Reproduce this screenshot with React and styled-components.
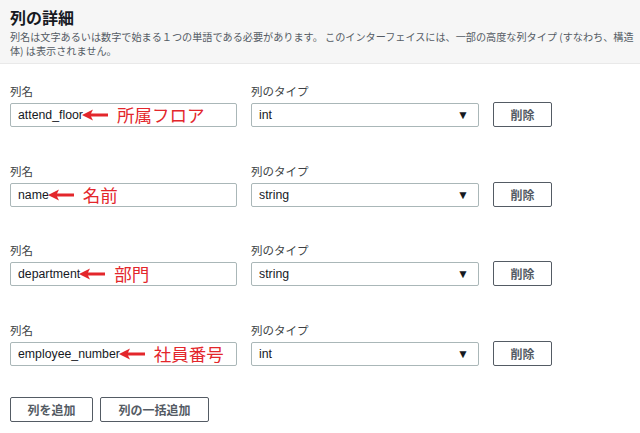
import React from 'react'
import styled, { createGlobalStyle } from 'styled-components'

const columns = [
  { name: 'attend_floor', type: 'int', note: '所属フロア' },
  { name: 'name', type: 'string', note: '名前' },
  { name: 'department', type: 'string', note: '部門' },
  { name: 'employee_number', type: 'int', note: '社員番号' },
]

const App = () => {
  return (
    <>
      <GlobalStyle />
      <Page>
        <Header>
          <Title>列の詳細</Title>
          <Description>
            <Line>列名は文字あるいは数字で始まる１つの単語である必要があります。 このインターフェイスには、一部の高度な列タイプ (すなわち、構造</Line>
            <Line>体) は表示されません。</Line>
          </Description>
        </Header>

        <Body>
          {columns.map((col) => (
            <Row key={col.name}>
              <Field>
                <Label>列名</Label>
                <InputBox>
                  <Value>{col.name}</Value>
                  <Arrow />
                  <Note>{col.note}</Note>
                </InputBox>
              </Field>
              <Field>
                <Label>列のタイプ</Label>
                <SelectBox>
                  <Value>{col.type}</Value>
                  <Caret>▼</Caret>
                </SelectBox>
              </Field>
              <DeleteButton>削除</DeleteButton>
            </Row>
          ))}

          <Actions>
            <Button>列を追加</Button>
            <Button>列の一括追加</Button>
          </Actions>
        </Body>
      </Page>
    </>
  )
}

const Arrow = () => (
  <ArrowSvg width="27" height="12" viewBox="0 0 27 12">
    <path d="M0 6 L11 0.5 L9 4.6 L26 4.6 L26 7.4 L9 7.4 L11 11.5 Z" fill="#e3262b" />
  </ArrowSvg>
)

export default App

const GlobalStyle = createGlobalStyle`
  body {
    margin: 0;
    background: #ffffff;
    font-family: "Liberation Sans", "Noto Sans CJK JP", sans-serif;
    color: #16191f;
  }
`

const Page = styled.div`
  width: 640px;
  height: 433px;
  overflow: hidden;
  background: #ffffff;
`

const Header = styled.header`
  background: #f6f6f6;
  border-bottom: 1px solid #e9e9e9;
  padding: 6px 10px 5px;
  height: 52px;
`

const Title = styled.h2`
  margin: 0;
  font-size: 16px;
  line-height: 22px;
  font-weight: bold;
  font-family: "Noto Sans CJK JP", sans-serif;
  color: #16191f;
`

const Description = styled.div`
  margin-top: 2px;
  font-family: "Noto Sans CJK JP", sans-serif;
  font-size: 10.15px;
  line-height: 14px;
  color: #545b64;
`

const Line = styled.div`
  white-space: nowrap;
`

const Body = styled.main`
  padding: 20px 10px 0;
`

const Row = styled.div`
  display: flex;
  align-items: flex-end;
  gap: 14px;
  margin-bottom: 36.5px;
`

const Field = styled.div`
  display: flex;
  flex-direction: column;
  gap: 5px;
`

const Label = styled.div`
  font-family: "Noto Sans CJK JP", sans-serif;
  font-size: 11.5px;
  line-height: 14px;
  color: #3c3f44;
`

const InputBox = styled.div`
  box-sizing: border-box;
  width: 227px;
  height: 24px;
  border: 1px solid #aab7b8;
  border-radius: 2px;
  padding: 0 7px;
  display: flex;
  align-items: center;
`

const SelectBox = styled(InputBox)`
  width: 228px;
  justify-content: space-between;
`

const Value = styled.span`
  font-family: "Liberation Sans", sans-serif;
  font-size: 12.3px;
  color: #16191f;
`

const ArrowSvg = styled.svg`
  flex: none;
  margin-left: -1px;
`

const Note = styled.span`
  margin-left: 8px;
  font-family: "Noto Sans CJK JP", sans-serif;
  font-size: 17.5px;
  line-height: 20px;
  color: #e3262b;
  white-space: nowrap;
`

const Caret = styled.span`
  font-size: 12px;
  color: #16191f;
  margin-right: 2px;
`

const Button = styled.button`
  box-sizing: border-box;
  height: 25px;
  padding: 0 12px;
  background: #ffffff;
  border: 1px solid #545b64;
  border-radius: 2px;
  font-family: "Noto Sans CJK JP", sans-serif;
  font-size: 12px;
  font-weight: bold;
  color: #545b64;
  cursor: pointer;
`

const DeleteButton = styled(Button)`
  width: 59px;
`

const Actions = styled.div`
  display: flex;
  gap: 7px;
  margin-top: -5px;

  & > button:first-child {
    width: 83px;
  }

  & > button:last-child {
    width: 109px;
  }
`
